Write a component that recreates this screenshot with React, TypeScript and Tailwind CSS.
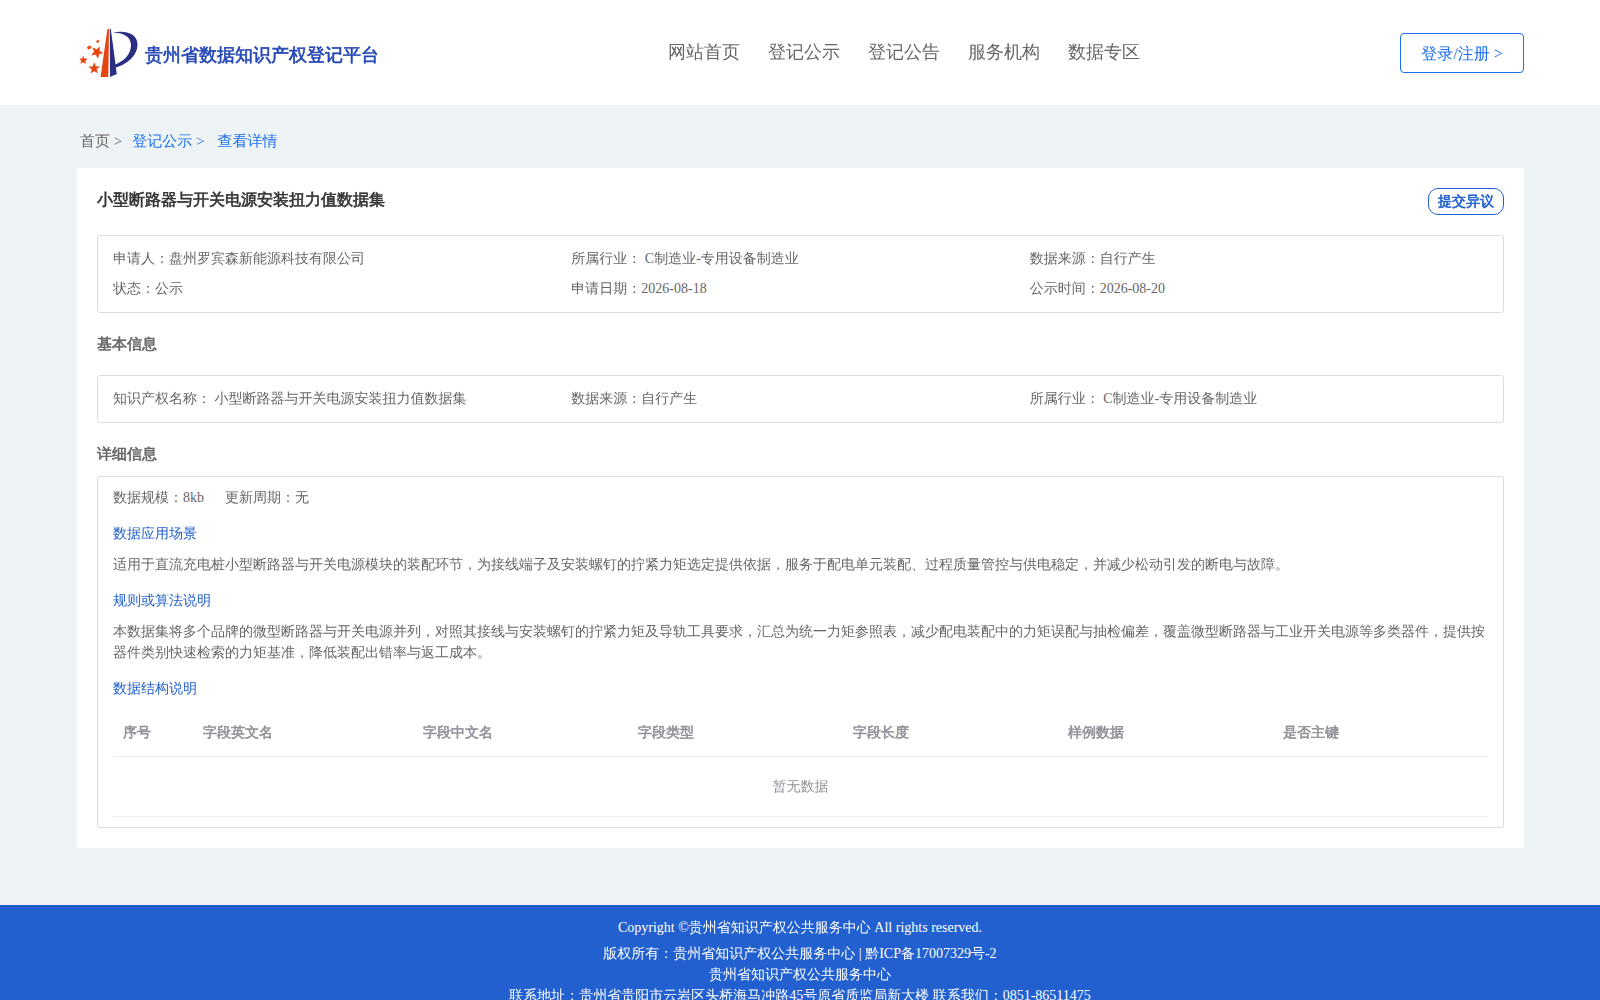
const navItems = ["网站首页", "登记公示", "登记公告", "服务机构", "数据专区"];

const summary = [
    { label: "申请人：", value: "盘州罗宾森新能源科技有限公司" },
    { label: "所属行业：", value: " C制造业-专用设备制造业" },
    { label: "数据来源：", value: "自行产生" },
    { label: "状态：", value: "公示" },
    { label: "申请日期：", value: "2026-08-18" },
    { label: "公示时间：", value: "2026-08-20" },
];

const basicInfo = [
    { label: "知识产权名称：", value: " 小型断路器与开关电源安装扭力值数据集" },
    { label: "数据来源：", value: "自行产生" },
    { label: "所属行业：", value: " C制造业-专用设备制造业" },
];

const columns = ["字段英文名", "字段中文名", "字段类型", "字段长度", "样例数据", "是否主键"];

// WenQuanYi has no bold cut, so the weight comes from a thin stroke
const bold = "font-bold [-webkit-text-stroke:0.6px]";

function Logo() {
    return (
        <svg className="h-[50px] w-[61px] shrink-0" viewBox="0 0 61 50" aria-hidden="true">
            <path d="M30.4 1 L32 1 L31.3 49 L23.6 49 Z" fill="#e5450f" />
            <path d="M32.8 1 L33.8 1 L39.8 46 L33 49 Z" fill="#2a2f83" />
            <path
                d="M35.5 4.5 C48 2 60.5 5 60.5 16.5 C60.5 28 49 37 38.5 39.5 L38 36.5 C46 33.5 54 27 54 17 C54 8 45 4.5 35.5 4.5 Z"
                fill="#2a2f83"
            />
            <g fill="#e5450f" stroke="#e5450f" strokeWidth="0.5">
                <path d="M22.6 19 L22.4 22.9 L25.8 25 L22 25.9 L20.9 30 L18.8 26.5 L14.6 26.9 L17.4 23.6 L15.8 20 L19.6 21.5 Z" />
                <path d="M17.3 35 L18.6 38.5 L22.4 38.8 L19.4 41.1 L20.6 44.8 L17.2 42.9 L14 45 L15 41.2 L12 38.9 L15.8 38.7 Z" />
                <path d="M6.1 28.4 L7.3 30.8 L10.2 31.1 L8 32.9 L8.4 35.6 L6.2 34.1 L3.8 35.3 L4.5 32.8 L2.8 31 L5.3 30.8 Z" />
                <path d="M12 18 L14.3 18.4 L13.4 20.6 L11.2 21.3 L10.2 19.2 Z" />
                <path d="M20.5 12.2 L22.1 12.6 L21.5 14.3 L20 14.5 L19.4 13.2 Z" />
            </g>
        </svg>
    );
}

function InfoBox({ items }: { items: { label: string; value: string }[] }) {
    return (
        <dl className="grid grid-cols-3 rounded-[3px] border border-[#dcdcdc] px-[15px] py-[8px] leading-[30px]">
            {items.map((item) => (
                <div key={item.label} className="flex whitespace-pre">
                    <dt>{item.label}</dt>
                    <dd>{item.value}</dd>
                </div>
            ))}
        </dl>
    );
}

function Section({ title, children }: { title: string; children: string }) {
    return (
        <section>
            <h3 className="mt-[15px] text-[#2260cf]">{title}</h3>
            <p className="mt-[10px]">{children}</p>
        </section>
    );
}

export default function App() {
    return (
        <div className="min-h-screen bg-[#eef3f6] font-['Liberation_Serif','WenQuanYi_Zen_Hei','Noto_Sans_CJK_SC',serif] text-[14px] leading-[21px] text-[#666]">
            <header className="flex h-[105px] items-center justify-between bg-white pr-[76px] pl-[77px]">
                <a href="#" className="flex w-[331px] items-center gap-[7px]">
                    <Logo />
                    <span className={`pt-[6px] text-[18px] text-[#2447b5] ${bold}`}>贵州省数据知识产权登记平台</span>
                </a>
                <nav className="flex gap-[28px] text-[18px]">
                    {navItems.map((item) => (
                        <a key={item} href="#">
                            {item}
                        </a>
                    ))}
                </nav>
                <button className="h-[40px] w-[124px] rounded-[4px] border border-[#1a6fee] pt-[2px] text-[16px] text-[#1a6fee]">
                    登录/注册 &gt;
                </button>
            </header>

            <main className="pr-[76px] pb-[57px] pl-[77px]">
                <nav className="flex h-[63px] items-center pt-[10px] pl-[3px] text-[15px] text-[#1a6fee]">
                    <a href="#" className="mr-[10px] text-[#666]">首页 &gt;</a>
                    <a href="#" className="mr-[13px]">登记公示 &gt;</a>
                    <span>查看详情</span>
                </nav>

                <div className="bg-white p-[20px]">
                    <div className="flex h-[47px] items-start justify-between">
                        <h1 className={`text-[16px] leading-[24px] text-[#333] ${bold}`}>小型断路器与开关电源安装扭力值数据集</h1>
                        <button className={`h-[27px] rounded-[10px] border border-[#2260cf] px-[9px] text-[#2260cf] ${bold}`}>
                            提交异议
                        </button>
                    </div>

                    <InfoBox items={summary} />

                    <h2 className={`h-[62px] pt-[21px] text-[15px] ${bold}`}>基本信息</h2>
                    <InfoBox items={basicInfo} />

                    <h2 className={`h-[53px] pt-[21px] text-[15px] ${bold}`}>详细信息</h2>
                    <div className="rounded-[3px] border border-[#dcdcdc] px-[15px] py-[10px]">
                        <div className="flex gap-[21px]">
                            <span>数据规模：8kb</span>
                            <span>更新周期：无</span>
                        </div>
                        <Section title="数据应用场景">
                            适用于直流充电桩小型断路器与开关电源模块的装配环节，为接线端子及安装螺钉的拧紧力矩选定提供依据，服务于配电单元装配、过程质量管控与供电稳定，并减少松动引发的断电与故障。
                        </Section>
                        <Section title="规则或算法说明">
                            本数据集将多个品牌的微型断路器与开关电源并列，对照其接线与安装螺钉的拧紧力矩及导轨工具要求，汇总为统一力矩参照表，减少配电装配中的力矩误配与抽检偏差，覆盖微型断路器与工业开关电源等多类器件，提供按器件类别快速检索的力矩基准，降低装配出错率与返工成本。
                        </Section>
                        <h3 className="mt-[15px] text-[#2260cf]">数据结构说明</h3>
                        <table className="mt-[10px] w-full table-fixed text-left text-[#909399]">
                            <colgroup>
                                <col className="w-[80px]" />
                                <col className="w-[220px]" />
                            </colgroup>
                            <thead>
                                <tr className="h-[47px] border-b border-[#ebeef5]">
                                    <th className={`px-[10px] ${bold}`}>序号</th>
                                    {columns.map((name) => (
                                        <th key={name} className={`px-[10px] ${bold}`}>
                                            {name}
                                        </th>
                                    ))}
                                </tr>
                            </thead>
                            <tbody>
                                <tr className="h-[60px] border-b border-[#ebeef5]">
                                    <td colSpan={7} className="text-center">
                                        暂无数据
                                    </td>
                                </tr>
                            </tbody>
                        </table>
                    </div>
                </div>
            </main>

            <footer className="bg-[#2260cf] pt-[12px] pb-[20px] text-center text-white">
                <p className="mb-[5px]">Copyright ©贵州省知识产权公共服务中心 All rights reserved.</p>
                <p>
                    版权所有：贵州省知识产权公共服务中心 | <a href="#">黔ICP备17007329号-2</a>
                </p>
                <p>贵州省知识产权公共服务中心</p>
                <p>联系地址：贵州省贵阳市云岩区头桥海马冲路45号原省质监局新大楼 联系我们：0851-86511475</p>
            </footer>
        </div>
    );
}
